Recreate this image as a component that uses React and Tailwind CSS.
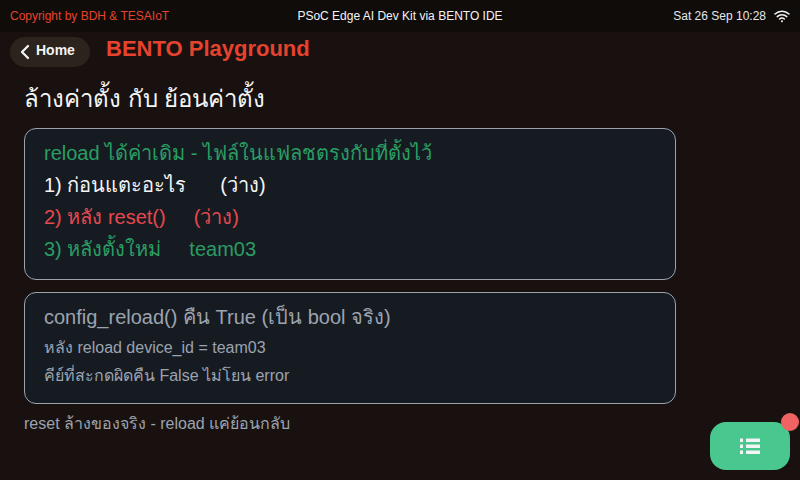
import React from 'react';
import { ChevronLeft } from 'lucide-react';

const Card = ({ className, children }) => (
  <div className={`w-[652px] rounded-xl border border-[#9ca3af] bg-[#161b22] px-[19px] ${className}`}>
    {children}
  </div>
);

const App = () => {
  return (
    <div className="relative h-[480px] w-[800px] overflow-hidden bg-[#181110] font-['Liberation_Sans',sans-serif]">
      <div className="flex h-8 items-center justify-between bg-[#100c0a] pl-2.5 pr-2.5 text-xs">
        <span className="text-[#e5432d]">Copyright by BDH &amp; TESAIoT</span>
        <span className="absolute left-0 right-0 text-center text-[#f3f4f6]">PSoC Edge AI Dev Kit via BENTO IDE</span>
        <div className="flex items-center gap-2 text-[#e5e7eb]">
          <span>Sat 26 Sep 10:28</span>
          <svg width="16" height="14" viewBox="0 0 16 14" fill="none" stroke="#f3f4f6" strokeWidth="1.5" strokeLinecap="round">
            <path d="M1 5a10 10 0 0 1 14 0" />
            <path d="M3.2 7.6a7 7 0 0 1 9.6 0" />
            <path d="M5.6 10a3.6 3.6 0 0 1 4.8 0" />
            <circle cx="8" cy="12.3" r="1" fill="#f3f4f6" stroke="none" />
          </svg>
        </div>
      </div>

      <div className="flex items-start pl-2.5 pt-[5px]">
        <div className="flex h-[30px] w-20 items-center rounded-full bg-[#2b231c] pl-[3px] text-sm font-bold text-[#f3f4f6]">
          <ChevronLeft size={24} strokeWidth={2.25} />
          <span className="-mt-[4px] -ml-[1px]">Home</span>
        </div>
        <h1 className="ml-4 -mt-[2px] text-[22px] font-bold leading-7 text-[#e5432d]">BENTO Playground</h1>
      </div>

      <div className="pl-6">
        <h2 className="mt-4 text-2xl leading-8 text-[#f3f4f6]">ล้างค่าตั้ง กับ ย้อนค่าตั้ง</h2>

        <Card className="mt-[13px] h-[152px] pt-2 text-[20px] leading-8">
          <div className="text-[#2a9d63]">reload ได้ค่าเดิม - ไฟล์ในแฟลชตรงกับที่ตั้งไว้</div>
          <div className="flex text-[#f3f4f6]">
            <span>1) ก่อนแตะอะไร</span>
            <span className="ml-[34px]">(ว่าง)</span>
          </div>
          <div className="flex text-[#e5484d]">
            <span>2) หลัง reset()</span>
            <span className="ml-[28px]">(ว่าง)</span>
          </div>
          <div className="flex text-[#2a9d63]">
            <span>3) หลังตั้งใหม่</span>
            <span className="ml-[28px]">team03</span>
          </div>
        </Card>

        <Card className="mt-3 h-[112px] pt-2 text-[#9ca3af]">
          <div className="text-[20px] leading-8">config_reload() คืน True (เป็น bool จริง)</div>
          <div className="mt-[1px] text-base leading-7">หลัง reload device_id = team03</div>
          <div className="text-base leading-7">คีย์ที่สะกดผิดคืน False ไม่โยน error</div>
        </Card>

        <p className="mt-2 text-base leading-6 text-[#9ca3af]">reset ล้างของจริง - reload แค่ย้อนกลับ</p>
      </div>

      <div className="absolute left-[710px] top-[422px] flex h-12 w-20 items-center justify-center rounded-2xl bg-[#48c78e]">
        <svg width="20" height="16" viewBox="0 0 20 16" fill="#f3f4f6">
          <rect x="0" y="0.5" width="3" height="3.5" />
          <rect x="0" y="6.5" width="3" height="3.5" />
          <rect x="0" y="12.5" width="3" height="3.5" />
          <rect x="6" y="0.5" width="14" height="3.5" />
          <rect x="6" y="6.5" width="14" height="3.5" />
          <rect x="6" y="12.5" width="14" height="3.5" />
        </svg>
      </div>
      <div className="absolute left-[781px] top-[413px] h-[18px] w-[18px] rounded-full bg-[#ef6363]" />
    </div>
  );
};

export default App;
